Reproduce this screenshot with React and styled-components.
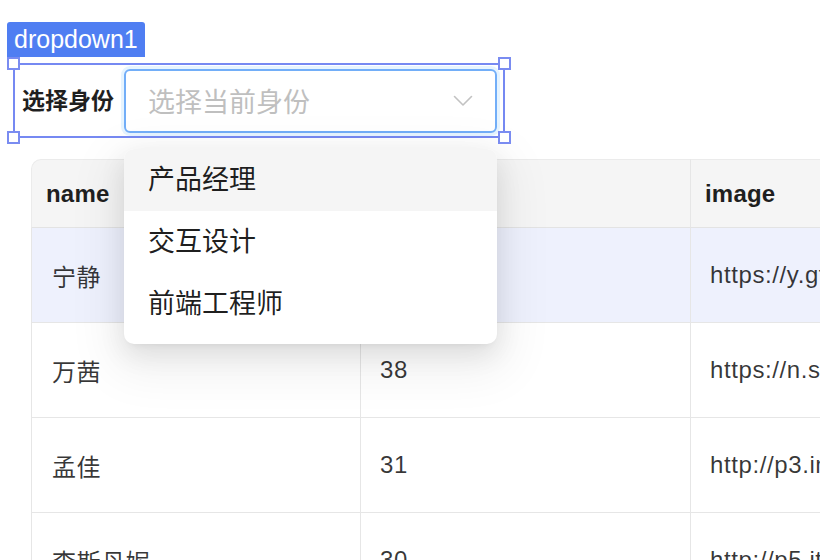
import React from "react";
import styled, { createGlobalStyle } from "styled-components";

const GlobalStyle = createGlobalStyle`
  html, body {
    margin: 0;
    padding: 0;
    background: #fff;
    overflow: hidden;
  }
  body {
    font-family: "Liberation Sans", "Noto Sans CJK SC", sans-serif;
    color: rgba(0, 0, 0, 0.88);
  }
`;

const Page = styled.div`
  width: 820px;
  height: 560px;
  overflow: hidden;
  padding-top: 22px;
  box-sizing: border-box;
`;

const Widget = styled.div`
  margin-left: 7px;
`;

const NameTag = styled.div`
  display: inline-block;
  height: 35px;
  line-height: 35px;
  padding: 0 7px;
  background: #4f7ef2;
  color: #fff;
  font-size: 25px;
  border-radius: 3px 3px 0 0;
`;

const Frame = styled.div`
  position: relative;
  display: flex;
  align-items: center;
  box-sizing: border-box;
  width: 492px;
  height: 75px;
  margin: 6px 0 0 6px;
  padding-left: 7px;
  border: 2px solid #7689f2;
`;

const Handle = styled.span`
  position: absolute;
  ${(p) => p.$v}: -8px;
  ${(p) => p.$h}: -8px;
  width: 13px;
  height: 13px;
  box-sizing: border-box;
  background: #fff;
  border: 2px solid #7a8cf1;
  z-index: 3;
`;

const FieldLabel = styled.label`
  font-size: 23px;
  font-weight: 700;
  line-height: 30px;
  color: #1f1f1f;
  margin-right: 10px;
  white-space: nowrap;
`;

const SelectWrap = styled.div`
  position: relative;
  width: 373px;
`;

const SelectBox = styled.div`
  display: flex;
  align-items: center;
  justify-content: space-between;
  box-sizing: border-box;
  height: 64px;
  padding: 0 22px;
  border: 2px solid #72aef8;
  border-radius: 6px;
  box-shadow: 0 0 0 3px rgba(5, 145, 255, 0.1);
  font-size: 27px;
  color: #bfbfbf;
`;

const Menu = styled.div`
  position: absolute;
  top: calc(100% + 16px);
  left: 0;
  width: 100%;
  padding-bottom: 9px;
  background: #fff;
  border-radius: 10px;
  overflow: hidden;
  box-shadow: 0 10px 27px rgba(0, 0, 0, 0.09), 0 5px 10px -7px rgba(0, 0, 0, 0.12),
    0 16px 48px 14px rgba(0, 0, 0, 0.06);
  z-index: 2;
`;

const MenuItem = styled.div`
  height: 62px;
  line-height: 62px;
  padding-left: 24px;
  font-size: 27px;
  color: rgba(0, 0, 0, 0.88);
  background: ${(p) => (p.$active ? "#f5f5f5" : "transparent")};
`;

const Table = styled.table`
  margin: 21px 0 0 31px;
  width: 990px;
  table-layout: fixed;
  border-collapse: separate;
  border-spacing: 0;
  font-size: 24px;
`;

const HeadCell = styled.th`
  height: 69px;
  box-sizing: border-box;
  padding: 0 19px 0 14px;
  text-align: left;
  font-weight: 700;
  letter-spacing: 0.2px;
  color: #1f1f1f;
  background: #f5f5f5;
  border-top: 1px solid #ebebeb;
  border-bottom: 1px solid #e3e3e3;
  border-right: 1px solid #e6e6e6;
  border-left: ${(p) => (p.$first ? "1px solid #ebebeb" : "none")};
  border-top-left-radius: ${(p) => (p.$first ? "10px" : "0")};
`;

const Row = styled.tr`
  background: ${(p) => (p.$hover ? "#eef1fd" : "#fff")};
`;

const Cell = styled.td`
  height: 95px;
  box-sizing: border-box;
  padding: 0 19px 0 ${(p) => (p.$first ? 20 : 19)}px;
  color: rgba(0, 0, 0, 0.78);
  letter-spacing: 0.6px;
  white-space: nowrap;
  overflow: hidden;
  border-bottom: 1px solid #e6e6e6;
  border-right: 1px solid #e6e6e6;
  border-left: ${(p) => (p.$first ? "1px solid #e6e6e6" : "none")};
`;

const Chevron = () => (
  <svg width="20" height="12" viewBox="0 0 20 12" fill="none">
    <path d="M1.5 1.5 L10 10 L18.5 1.5" stroke="#c2c2c2" strokeWidth="1.6" strokeLinecap="round" strokeLinejoin="round" />
  </svg>
);

const options = ["产品经理", "交互设计", "前端工程师"];

const rows = [
  { name: "宁静", age: 32, image: "https://y.gtimg.cn/music/photo_new/T001R300x300.jpg" },
  { name: "万茜", age: 38, image: "https://n.sinaimg.cn/sinakd/photo/avatar.jpg" },
  { name: "孟佳", age: 31, image: "http://p3.img.cctvpic.com/photoworkspace/avatar.jpg" },
  { name: "李斯丹妮", age: 30, image: "http://p5.itc.cn/images01/avatar.jpg" },
];

export default function App() {
  return (
    <Page>
      <GlobalStyle />
      <Widget>
        <NameTag>dropdown1</NameTag>
        <Frame>
          <Handle $v="top" $h="left" />
          <Handle $v="top" $h="right" />
          <Handle $v="bottom" $h="left" />
          <Handle $v="bottom" $h="right" />
          <FieldLabel>选择身份</FieldLabel>
          <SelectWrap>
            <SelectBox>
              <span>选择当前身份</span>
              <Chevron />
            </SelectBox>
            <Menu>
              {options.map((o, i) => (
                <MenuItem key={o} $active={i === 0}>
                  {o}
                </MenuItem>
              ))}
            </Menu>
          </SelectWrap>
        </Frame>
      </Widget>
      <Table>
        <thead>
          <tr>
            <HeadCell $first>name</HeadCell>
            <HeadCell>age</HeadCell>
            <HeadCell>image</HeadCell>
          </tr>
        </thead>
        <tbody>
          {rows.map((r, i) => (
            <Row key={r.name} $hover={i === 0}>
              <Cell $first>{r.name}</Cell>
              <Cell>{r.age}</Cell>
              <Cell>{r.image}</Cell>
            </Row>
          ))}
        </tbody>
      </Table>
    </Page>
  );
}
